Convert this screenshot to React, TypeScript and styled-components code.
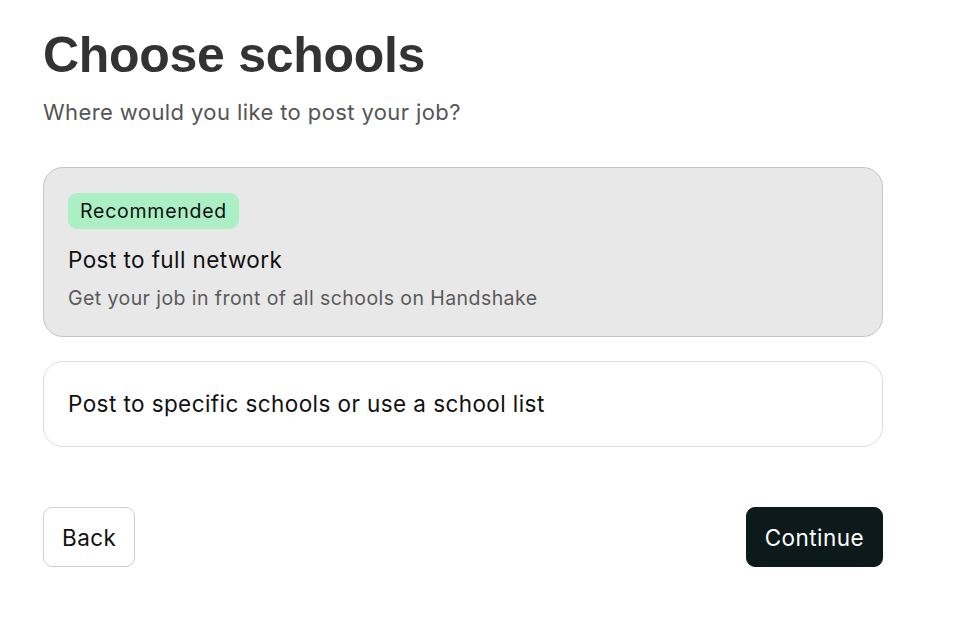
import styled, { createGlobalStyle } from "styled-components";

const GlobalStyle = createGlobalStyle`
  body {
    margin: 0;
    background: #ffffff;
    font-family: Inter, "Noto Sans", sans-serif;
    color: #111111;
  }
`;

interface CardProps {
  selected?: boolean;
}

interface ButtonProps {
  primary?: boolean;
}

const Page = styled.div`
  width: 840px;
  padding: 26px 0 0 43px;
  display: flex;
  flex-direction: column;
`;

const Title = styled.h1`
  font-family: "Liberation Sans", Arial, sans-serif;
  font-size: 50px;
  font-weight: bold;
  letter-spacing: -0.3px;
  color: #333333;
  margin: 0;
  line-height: 58px;
`;

const Subtitle = styled.p`
  font-size: 22px;
  letter-spacing: 0.4px;
  color: #555555;
  margin: 14px 0 0;
  line-height: 28px;
`;

const Options = styled.div`
  display: flex;
  flex-direction: column;
  gap: 24px;
  margin-top: 41px;
`;

const Card = styled.div<CardProps>`
  box-sizing: border-box;
  display: flex;
  flex-direction: column;
  align-items: flex-start;
  justify-content: center;
  padding: ${(props) => (props.selected ? "24px 24px 26px" : "0 24px")};
  min-height: ${(props) => (props.selected ? "170px" : "86px")};
  background: ${(props) => (props.selected ? "#e8e8e8" : "#ffffff")};
  border: 1px solid ${(props) => (props.selected ? "#c4c4c4" : "#dcdcdc")};
  border-radius: 20px;
  cursor: pointer;
`;

const Badge = styled.span`
  background: #aaf0c4;
  color: #111111;
  font-size: 19.5px;
  letter-spacing: 0.75px;
  line-height: 36px;
  padding: 0 12px;
  border-radius: 9px;
`;

const OptionTitle = styled.div`
  font-size: 22.5px;
  letter-spacing: 0.42px;
  font-weight: 400;
  color: #111111;
  line-height: 28px;
`;

const BadgeTitle = styled(OptionTitle)`
  margin-top: 17px;
`;

const OptionText = styled.div`
  font-size: 19.5px;
  letter-spacing: 0.43px;
  color: #5a5a5a;
  line-height: 24px;
  margin-top: 12px;
`;

const Actions = styled.div`
  display: flex;
  justify-content: space-between;
  margin-top: 60px;
`;

const Button = styled.button<ButtonProps>`
  font-family: Inter, "Noto Sans", sans-serif;
  font-size: 22.5px;
  letter-spacing: 0.45px;
  height: 60px;
  padding: 0 18px;
  border-radius: 9px;
  cursor: pointer;
  background: ${(props) => (props.primary ? "#0c1a1c" : "#ffffff")};
  color: ${(props) => (props.primary ? "#ffffff" : "#111111")};
  border: 1px solid ${(props) => (props.primary ? "#0c1a1c" : "#cfcfcf")};
`;

export default function App() {
  return (
    <>
      <GlobalStyle />
      <Page>
        <Title>Choose schools</Title>
        <Subtitle>Where would you like to post your job?</Subtitle>
        <Options>
          <Card selected>
            <Badge>Recommended</Badge>
            <BadgeTitle>Post to full network</BadgeTitle>
            <OptionText>Get your job in front of all schools on Handshake</OptionText>
          </Card>
          <Card>
            <OptionTitle>Post to specific schools or use a school list</OptionTitle>
          </Card>
        </Options>
        <Actions>
          <Button>Back</Button>
          <Button primary>Continue</Button>
        </Actions>
      </Page>
    </>
  );
}
